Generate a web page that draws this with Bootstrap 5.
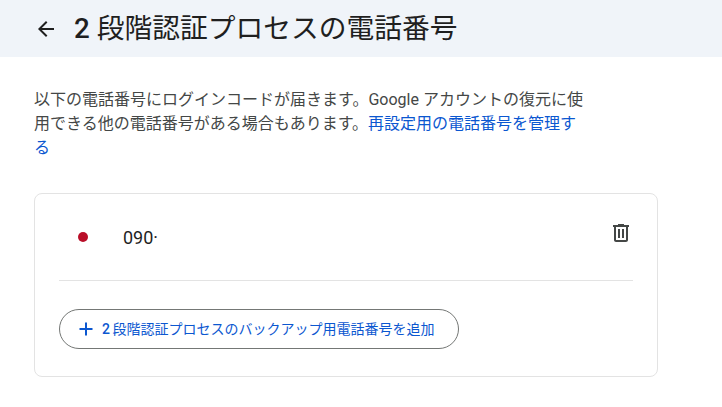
<!DOCTYPE html>
<html lang="ja">
<head>
<meta charset="utf-8">
<link href="https://cdn.jsdelivr.net/npm/bootstrap@5.3.0/dist/css/bootstrap.min.css" rel="stylesheet">
<style>
html,body{height:407px;overflow:hidden;background:#fff}
body{font-family:Roboto,"Noto Sans CJK JP",sans-serif;color:#444746}
.top-band{height:57px;background:#f0f4f9;padding-left:34px;gap:16px}
.top-band h1{font-size:27.75px;font-weight:400;line-height:36px;color:#1f1f1f;margin:0;white-space:nowrap}
.top-band svg{display:block}
.num-med{font-weight:500}
.intro{margin:31px 0 0 34px;width:552px;font-size:16px;line-height:24px;color:#444746}
.intro a{color:#0b57d0;text-decoration:none}
.phone-box{margin:33px 0 0 34px;width:624px;height:184px;border:1px solid #e3e3e3;border-radius:8px;padding:0 24px}
.phone-row{height:87px;border-bottom:1px solid #e3e3e3}
.dot-red{width:10px;height:10px;border-radius:50%;background:#b90e28;margin:0 35px 0 19px}
.phone-no{font-size:18px;font-weight:400;color:#1f1f1f;line-height:24px;padding-top:2px}
.trash{margin-top:-8px}
.add-btn{margin-top:28px;height:40px;width:400px;border:1px solid #747775;border-radius:20px;padding:0 0 0 17px;background:#fff;color:#0b57d0;font-size:14px;font-weight:400;line-height:20px;gap:7px;white-space:nowrap;word-spacing:-1px}
</style>
</head>
<body>
<div class="top-band d-flex align-items-center">
<svg width="24" height="24" viewBox="0 0 24 24" fill="#1f1f1f"><path d="M20 11H7.83l5.59-5.59L12 4l-8 8 8 8 1.41-1.41L7.83 13H20z"/></svg>
<h1><span class="num-med">2</span> 段階認証プロセスの電話番号</h1>
</div>
<p class="intro">以下の電話番号にログインコードが届きます。Google アカウントの復元に使用できる他の電話番号がある場合もあります。<a href="#">再設定用の電話番号を管理する</a></p>
<div class="phone-box">
<div class="phone-row d-flex align-items-center">
<span class="dot-red"></span>
<span class="phone-no flex-grow-1">090·</span>
<svg class="trash" width="24" height="24" viewBox="0 0 24 24" fill="#444746"><path d="M15 3V4H20V6H19V19C19 20.1 18.1 21 17 21H7C5.9 21 5 20.1 5 19V6H4V4H9V3H15ZM7 6V19H17V6H7ZM9 8H11V17H9V8ZM13 8H15V17H13V8Z"/></svg>
</div>
<button type="button" class="btn add-btn d-flex align-items-center">
<svg width="18" height="18" viewBox="0 0 18 18" fill="#0b57d0"><path d="M8 2.5h2V8h5.5v2H10v5.5H8V10H2.5V8H8z"/></svg>
<span><span class="num-med">2</span> 段階認証プロセスのバックアップ用電話番号を追加</span>
</button>
</div>
<script src="https://cdn.jsdelivr.net/npm/bootstrap@5.3.0/dist/js/bootstrap.bundle.min.js"></script>
</body>
</html>
